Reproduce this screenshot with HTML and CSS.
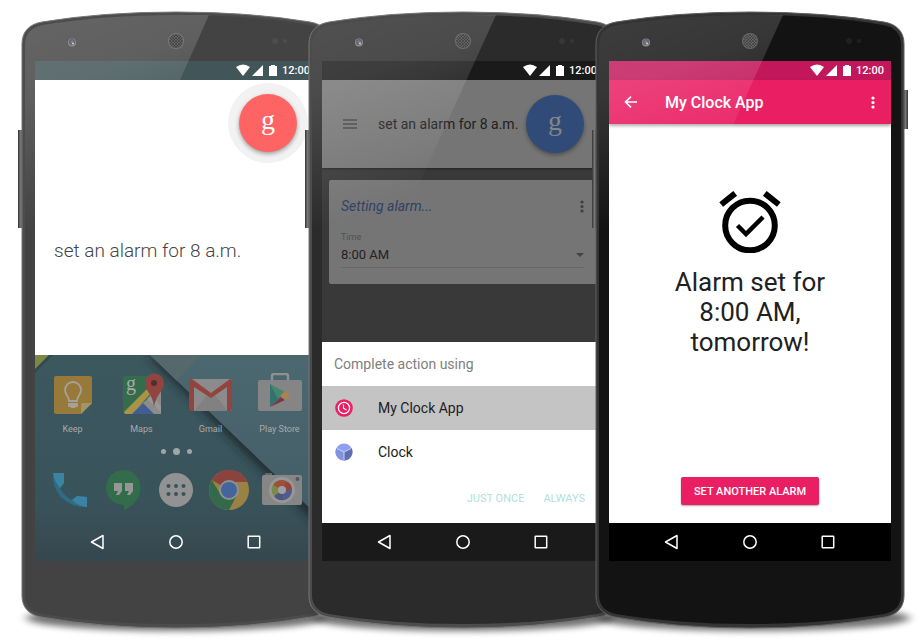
FILE: index.html
```html
<!DOCTYPE html>
<html lang="en">
<head>
<meta charset="utf-8">
<title>Set an alarm by voice</title>
<link rel="stylesheet" href="styles.css">
</head>
<body>
<svg class="defs" aria-hidden="true">
  <defs>
    <linearGradient id="glare" x1="0" y1="0" x2="0.25" y2="1">
      <stop offset="0" stop-color="#fff" stop-opacity=".18"/>
      <stop offset=".3" stop-color="#fff" stop-opacity=".15"/>
      <stop offset=".8" stop-color="#fff" stop-opacity="0"/>
    </linearGradient>
    <linearGradient id="key" x1="0" x2="1">
      <stop offset="0" stop-color="#333"/>
      <stop offset=".5" stop-color="#777"/>
      <stop offset="1" stop-color="#333"/>
    </linearGradient>
    <pattern id="mesh" width="3" height="3" patternUnits="userSpaceOnUse">
      <circle cx="1" cy="1" r=".9" fill="#1c1c1c"/>
      <circle cx="2.500" cy="2.500" r=".7" fill="#1c1c1c"/>
    </pattern>
    <filter id="soft" x="-20%" y="-80%" width="140%" height="260%"><feGaussianBlur stdDeviation="5 3"/></filter>
    <filter id="fold" x="-20%" y="-20%" width="140%" height="140%"><feGaussianBlur stdDeviation="5"/></filter>
    <path id="shell" d="M0 34C0 21 8 14 20 12Q80 2 154 2T288 12C300 14 308 21 308 34V586C308 598 300 605 289 607Q228 618 154 618T19 607C8 605 0 598 0 586Z"/>
    <path id="shell-inner" d="M3 35C3 23 10 17 21 15Q80 5 154 5T287 15C298 17 305 23 305 35V585C305 596 298 602 288 604Q228 614 154 614T20 604C10 602 3 596 3 585Z"/>
    <g id="status-glyphs" fill="#fff">
      <path d="M0 3Q7-2 14 3L7 12Z"/>
      <path d="M27 1V12H16Z"/>
      <path d="M33 2H35V1H39V2H41V12H33V2Z"/>
    </g>
    <g id="back-glyph"><path d="M13 1.500V14.500L1.500 8Z" fill="none" stroke="#fff" stroke-width="1.500" stroke-linejoin="round"/></g>
    <g id="home-glyph"><circle cx="8" cy="8" r="6.200" fill="none" stroke="#fff" stroke-width="1.500"/></g>
    <g id="recent-glyph"><rect x="2.200" y="2.200" width="11.500" height="11.500" rx=".5" fill="none" stroke="#fff" stroke-width="1.500"/></g>
    <g id="more-glyph"><circle cx="2" cy="2" r="1.600"/><circle cx="2" cy="6.500" r="1.600"/><circle cx="2" cy="11" r="1.600"/></g>
    <g id="hardware">
      <circle cx="50" cy="32.500" r="4" fill="#777"/><circle cx="50" cy="32" r="3" fill="#444"/><circle cx="50" cy="32" r="1.800" fill="#5a59a0"/><circle cx="51" cy="33.500" r="1" fill="#ccc"/>
      <circle cx="154" cy="31" r="8" fill="#777" fill-opacity=".6"/><circle cx="154" cy="31" r="7" fill="#4a4a4a"/><circle cx="154" cy="31" r="7" fill="url(#mesh)"/>
      <circle cx="253" cy="31" r="3" fill="#fff" fill-opacity=".06"/><circle cx="263" cy="31" r="2" fill="#fff" fill-opacity=".06"/>
    </g>
  </defs>
</svg>

<main class="stage">
  <section class="phone phone-listen" aria-label="Voice search">
    <svg class="frame" viewBox="0 0 308 619" preserveAspectRatio="none" aria-hidden="true">
      <ellipse class="ground" cx="154" cy="608" rx="150" ry="13"/>
      <rect x="-4" y="120" width="5" height="98" fill="url(#key)"/>
      <use href="#shell" class="rim"/><use href="#shell-inner" class="face"/><use href="#hardware"/>
    </svg>
    <div class="screen">
      <header class="status status-home"><svg width="41" height="13" aria-hidden="true"><use href="#status-glyphs"/></svg><span>12:00</span></header>
      <div class="listen">
        <div class="halo"><button class="mic mic-red" aria-label="Listening">g</button></div>
        <p class="heard">set an alarm for 8 a.m.</p>
      </div>
      <div class="home">
        <svg class="wallpaper" viewBox="0 0 282 206" preserveAspectRatio="none" aria-hidden="true">
          <defs>
            <linearGradient id="teal" x1="0" y1="0" x2="0" y2="1"><stop offset="0" stop-color="#3c585f"/><stop offset=".7" stop-color="#39535b"/><stop offset="1" stop-color="#36474e"/></linearGradient>
            <linearGradient id="slate" x1="0" y1="0" x2="0" y2="1"><stop offset="0" stop-color="#4b6870"/><stop offset="1" stop-color="#445d67"/></linearGradient>
          </defs>
          <rect width="282" height="206" fill="url(#teal)"/>
          <path d="M112 0H135L282 145V170Z" fill="#1d2529" opacity=".85" filter="url(#fold)"/>
          <path d="M115 0H282V160Z" fill="url(#slate)"/>
          <path d="M115 0H166L142 26Z" fill="#55696c"/>
          <path d="M0 18L18 0H0Z" fill="#263a3f" opacity=".5"/><path d="M0 14L14 0H0Z" fill="#7d8747"/>
        </svg>
        <div class="apps">
          <button class="app"><svg width="44" height="44" viewBox="0 0 44 44" aria-hidden="true">
            <rect x="3" y="3" width="38" height="38" rx="2" fill="#97793a"/><path d="M41 30V41H30Z" fill="#3c585f"/><path d="M30 41V32Q30 30 32 30H41Z" fill="#a59463"/>
            <path d="M18 28C18 23 14 22 14 17A8 8 0 0 1 30 17C30 22 26 23 26 28Z M18 31H26V33H18Z M20 34H24" fill="none" stroke="#a4a29b" stroke-width="1.800"/></svg><span>Keep</span></button>
          <button class="app"><svg width="44" height="44" viewBox="0 0 44 44" aria-hidden="true">
            <rect x="3" y="3" width="38" height="38" rx="2" fill="#356c4c"/><path d="M41 16V41H8Z" fill="#8c8c8c"/><path d="M4 39L29 14L33 18L12 41H5Z" fill="#a99347"/><path d="M12 41L23 30L34 41Z" fill="#405e94"/><path d="M27 26L31 22L41 33V39Z" fill="#979797"/>
            <path d="M34 34C33 21 25 18 25 10A9.500 9.500 0 0 1 44 10C44 18 36 21 34 34Z" fill="#914540"/><circle cx="34" cy="10" r="3" fill="#552e2c"/><text class="map-g" x="6" y="17">g</text></svg><span>Maps</span></button>
          <button class="app"><svg width="44" height="44" viewBox="0 0 44 44" aria-hidden="true">
            <rect x="1" y="6" width="42" height="32" rx="2" fill="#8b8b8b"/><path d="M5 38L18 22L22 25L26 22L39 38Z" fill="#818181"/><path d="M0 8C0 6 1 6 3 6L22 20L41 6Q43 6 43 8V36Q43 38 41 38H38V14L22 25L5 14V38H3Q0 38 0 36Z" fill="#92443f"/></svg><span>Gmail</span></button>
          <button class="app"><svg width="44" height="44" viewBox="0 0 44 44" aria-hidden="true">
            <path d="M14 8V3Q14 1 16 1H28Q30 1 30 3V8" fill="none" stroke="#909090" stroke-width="2.500"/><rect x="0" y="7" width="44" height="31" rx="2" fill="#858585"/>
            <path d="M12 11L25 22L12 34Z" fill="#32736f"/><path d="M12 11L27 19L20 26Z" fill="#46866f"/><path d="M12 34L23 24L27 27Z" fill="#7d344b"/><path d="M27 18L33 22L27 27L22 23Z" fill="#a7844c"/></svg><span>Play Store</span></button>
        </div>
        <div class="pages" aria-hidden="true"><i></i><i class="current"></i><i></i></div>
        <div class="dock">
          <button aria-label="Phone"><svg width="42" height="42" viewBox="0 0 42 42"><path d="M4 4H15V14L11 19Q15 27 23 31L28 27L38 28V38Q23 39 12 28Q3 18 4 4Z" fill="#2f6b85"/><path d="M4 4H15V14L11 19Q5 12 4 4ZM23 31L28 27L38 28V38Q29 37 23 31Z" fill="#3a83a3"/></svg></button>
          <button aria-label="Hangouts"><svg width="42" height="42" viewBox="0 0 42 42"><path d="M21 1A17.500 17.500 0 0 1 38.500 18.500C38.500 31 30 37 22 41V36A17.500 17.500 0 1 1 21 1Z" fill="#336c4b"/><path d="M12 14H20V22L17 26H14L16 22H12ZM23 14H31V22L28 26H25L27 22H23Z" fill="#969696"/></svg></button>
          <button aria-label="All apps"><svg width="42" height="42" viewBox="0 0 42 42"><circle cx="21" cy="21" r="17" fill="#929292"/><g fill="#3a535b"><circle cx="13.500" cy="17" r="2"/><circle cx="21" cy="17" r="2"/><circle cx="28.500" cy="17" r="2"/><circle cx="13.500" cy="25" r="2"/><circle cx="21" cy="25" r="2"/><circle cx="28.500" cy="25" r="2"/></g></svg></button>
          <button aria-label="Chrome"><svg width="42" height="42" viewBox="0 0 42 42"><circle cx="21" cy="21" r="20" fill="#9a8245"/><path d="M21 21L3.700 11A20 20 0 0 1 39.500 13H21Z" fill="#8b433e"/><path d="M3.700 11A20 20 0 0 0 21 41L29 26L21 21L13 26Z" fill="#336a4b"/><circle cx="21" cy="21" r="10" fill="#8f9190"/><circle cx="21" cy="21" r="8" fill="#44659b"/></svg></button>
          <button aria-label="Camera"><svg width="42" height="42" viewBox="0 0 42 42"><path d="M4 4H11V8H4Z" fill="#656565"/><rect x="1" y="6" width="40" height="30" rx="2" fill="#868686"/><circle cx="36.500" cy="10" r="2" fill="#555"/><circle cx="21" cy="21" r="13" fill="#979797"/>
            <circle cx="21" cy="21" r="10" fill="#9b7d43"/><path d="M21 21L12 16A10 10 0 0 1 25 12Z" fill="#9a503b"/><path d="M21 21L31 21A10 10 0 0 1 23 31Z" fill="#525b90"/><path d="M21 21L23 31A10 10 0 0 1 13 27Z" fill="#4d5581"/><path d="M21 21L13 27A10 10 0 0 1 12 16Z" fill="#798a48"/><path d="M21 21L25 12A10 10 0 0 1 31 21Z" fill="#90463d"/><circle cx="21" cy="21" r="4" fill="#a0a0a0"/></svg></button>
        </div>
        <nav class="nav nav-clear">
          <button aria-label="Back"><svg width="16" height="16"><use href="#back-glyph"/></svg></button>
          <button aria-label="Home"><svg width="16" height="16"><use href="#home-glyph"/></svg></button>
          <button aria-label="Recent apps"><svg width="16" height="16"><use href="#recent-glyph"/></svg></button>
        </nav>
      </div>
    </div>
    <svg class="glare" viewBox="0 0 308 619" preserveAspectRatio="none" aria-hidden="true"><path d="M3 35C3 23 10 17 21 15Q80 5 154 5L187 5L158 70H13V260H3Z" fill="url(#glare)"/></svg>
  </section>

  <section class="phone phone-choose" aria-label="Choose an app">
    <svg class="frame" viewBox="0 0 308 619" preserveAspectRatio="none" aria-hidden="true">
      <ellipse class="ground" cx="154" cy="608" rx="150" ry="13"/>
      <rect x="-4" y="120" width="5" height="98" fill="url(#key)"/>
      <use href="#shell" class="rim"/><use href="#shell-inner" class="face"/><use href="#hardware"/>
    </svg>
    <div class="screen">
      <header class="status status-dark"><svg width="41" height="13" aria-hidden="true"><use href="#status-glyphs"/></svg><span>12:00</span></header>
      <div class="query">
        <button class="menu" aria-label="Menu"><svg width="14" height="10" viewBox="0 0 14 10"><path d="M0 1H14M0 5H14M0 9H14" stroke="#414141" stroke-width="1.300"/></svg></button>
        <span class="query-text">set an alarm for 8 a.m.</span>
        <button class="mic mic-blue" aria-label="Voice search">g</button>
      </div>
      <div class="results">
        <div class="card">
          <div class="card-head"><em>Setting alarm...</em><button aria-label="More options"><svg width="4" height="13" fill="#3e3e3e"><use href="#more-glyph"/></svg></button></div>
          <label class="time-label" for="time">Time</label>
          <div class="time-field">
            <select id="time"><option>8:00 AM</option></select>
            <svg width="8" height="4" aria-hidden="true"><path d="M0 0H8L4 4Z" fill="#444"/></svg>
          </div>
        </div>
      </div>
      <div class="sheet">
        <h2>Complete action using</h2>
        <button class="choice chosen"><svg width="18" height="18" viewBox="0 0 18 18" aria-hidden="true"><circle cx="9" cy="9" r="8.800" fill="#e91e63"/><circle cx="9" cy="9" r="5.600" fill="none" stroke="#fff" stroke-width="1.300"/><path d="M8.500 5.500V9.300L11.500 11" fill="none" stroke="#fff" stroke-width="1.100"/></svg>My Clock App</button>
        <button class="choice"><svg width="18" height="18" viewBox="0 0 18 18" aria-hidden="true"><circle cx="9" cy="9" r="8.500" fill="#8e9ff0"/><path d="M9 9L16.500 5A8.500 8.500 0 0 1 9 17.500Z" fill="#5d6fae"/><path d="M9 9L1.500 5A8.500 8.500 0 0 0 9 17.500Z" fill="#8192df"/><path d="M2 5.500L9 9L16 5.500M9 9V17" fill="none" stroke="#c9d1fa" stroke-width="1"/></svg>Clock</button>
        <div class="sheet-actions"><button>JUST ONCE</button><button>ALWAYS</button></div>
      </div>
      <nav class="nav nav-dark">
        <button aria-label="Back"><svg width="16" height="16"><use href="#back-glyph"/></svg></button>
        <button aria-label="Home"><svg width="16" height="16"><use href="#home-glyph"/></svg></button>
        <button aria-label="Recent apps"><svg width="16" height="16"><use href="#recent-glyph"/></svg></button>
      </nav>
    </div>
    <svg class="glare" viewBox="0 0 308 619" preserveAspectRatio="none" aria-hidden="true"><path d="M3 35C3 23 10 17 21 15Q80 5 154 5L187 5L71 260H3Z" fill="url(#glare)"/></svg>
  </section>

  <section class="phone phone-done" aria-label="My Clock App">
    <svg class="frame" viewBox="0 0 308 619" preserveAspectRatio="none" aria-hidden="true">
      <ellipse class="ground" cx="158" cy="608" rx="156" ry="13"/>
      <rect x="-4" y="120" width="5" height="98" fill="url(#key)"/><rect x="307" y="80" width="5" height="39" fill="url(#key)"/>
      <use href="#shell" class="rim"/><use href="#shell-inner" class="face"/><use href="#hardware"/>
    </svg>
    <div class="screen">
      <header class="status status-pink"><svg width="41" height="13" aria-hidden="true"><use href="#status-glyphs"/></svg><span>12:00</span></header>
      <div class="toolbar">
        <button class="up" aria-label="Back"><svg width="14" height="12" viewBox="0 0 14 12"><path d="M7 .7L1.500 6L7 11.300M1.500 6H13" fill="none" stroke="#fff" stroke-width="1.600"/></svg></button>
        <h1>My Clock App</h1>
        <button aria-label="More options"><svg width="4" height="13" fill="#fff"><use href="#more-glyph"/></svg></button>
      </div>
      <div class="confirm">
        <svg width="62" height="62" viewBox="0 0 62 62" aria-hidden="true"><g fill="none" stroke="#000"><circle cx="31" cy="34.500" r="24.800" stroke-width="6"/><path d="M18.500 34.500L27 43L44 26" stroke-width="4.500"/><path d="M2.200 13.500L16.200 2.300M59.800 13.500L45.800 2.300" stroke-width="6"/></g></svg>
        <p>Alarm set for 8:00 AM, tomorrow!</p>
        <button class="again">SET ANOTHER ALARM</button>
      </div>
      <nav class="nav nav-black">
        <button aria-label="Back"><svg width="16" height="16"><use href="#back-glyph"/></svg></button>
        <button aria-label="Home"><svg width="16" height="16"><use href="#home-glyph"/></svg></button>
        <button aria-label="Recent apps"><svg width="16" height="16"><use href="#recent-glyph"/></svg></button>
      </nav>
    </div>
    <svg class="glare" viewBox="0 0 308 619" preserveAspectRatio="none" aria-hidden="true"><path d="M3 35C3 23 10 17 21 15Q80 5 154 5L187 5L71 260H3Z" fill="url(#glare)"/></svg>
  </section>
</main>
</body>
</html>
```
FILE: styles.css
```css
* { box-sizing: border-box; }
body { margin: 0; background: #fff; color: #212121; font-family: Roboto, "Liberation Sans", sans-serif; }
h1, h2, p { margin: 0; font-weight: 400; }
button { display: flex; align-items: center; justify-content: center; margin: 0; padding: 0; border: 0; background: none; color: inherit; font: inherit; }
svg { display: block; flex: none; }
.defs { position: absolute; width: 0; height: 0; }

/* Three overlapping handsets */
.stage { display: flex; padding: 10px 16px 12px 22px; overflow: hidden; }
.phone { position: relative; isolation: isolate; flex: 1; min-width: 0; padding: 51px 13px 68px; }
.phone + .phone { margin-left: -21px; }
.frame, .glare { position: absolute; top: 0; left: 0; width: 100%; height: 100%; overflow: visible; pointer-events: none; }
.ground { fill: #000; opacity: .55; filter: url(#soft); }
.rim { fill: #4c4c4c; stroke: #777; stroke-width: 1; }
.phone-listen .face { fill: #434343; }
.phone-choose .face { fill: #2b2b2b; }
.phone-done .face { fill: #131313; }
.phone-done .rim { fill: #343434; stroke: #606060; }
.screen { position: relative; isolation: isolate; display: flex; flex-direction: column; min-height: 500px; overflow: hidden; }

/* System bars */
.status { display: flex; align-items: center; justify-content: flex-end; gap: 5px; height: 19px; padding-right: 7px; color: #fff; font-size: 11px; font-weight: 500; line-height: 19px; }
.status-home { background: #425558; }
.status-dark { background: #1a1a1a; }
.status-pink { background: #c2185b; }
.nav { display: flex; justify-content: center; height: 38px; }
.nav button { width: 78px; height: 38px; }
.nav-dark { background: #1a1a1a; }
.nav-black { background: #000; }

/* Voice input and home screen */
.mic { width: 58px; height: 58px; padding-bottom: 6px; border-radius: 50%; font: 28px/1 "Liberation Serif", serif; }
.mic-red { background: #ff6464; color: #fff; box-shadow: 0 2px 4px rgba(0, 0, 0, .35); }
.mic-blue { background: #304b78; color: #858585; box-shadow: 0 2px 4px rgba(0, 0, 0, .35); }
.listen { display: flex; flex-direction: column; height: 275px; padding: 3px 9px 0 19px; background: #fff; }
.halo { display: grid; place-items: center; align-self: flex-end; width: 80px; height: 80px; border-radius: 50%; background: #f2f2f2; }
.heard { margin-top: 76px; color: #444; font-size: 19px; font-weight: 300; line-height: 24px; }
.home { position: relative; display: flex; flex: 1; flex-direction: column; padding-top: 18px; }
.home > * { position: relative; }
.home > .wallpaper { position: absolute; top: 0; left: 0; width: 100%; height: 100%; }
.apps { display: grid; grid-template-columns: repeat(4, 1fr); padding: 0 3px; }
.app { flex-direction: column; gap: 6px; color: #aaa; font-size: 9px; line-height: 12px; }
.map-g { fill: #a5aaa7; font: 20px "Liberation Serif", serif; }
.pages { display: flex; align-items: center; justify-content: center; gap: 7px; height: 8px; margin: 12px 0 14px; }
.pages i { width: 5px; height: 5px; border-radius: 50%; background: #a0a6a8; }
.pages .current { width: 7px; height: 7px; }
.dock { display: grid; grid-template-columns: repeat(5, 1fr); padding: 0 9px; }
.home > .nav { margin-top: auto; }

/* Search result behind the chooser */
.query { display: flex; align-items: center; height: 88px; padding: 0 20px 0 21px; background: #757575; box-shadow: 0 1px 2px #222; z-index: 1; }
.query-text { flex: 1; margin-left: 21px; color: #202020; font-size: 14px; white-space: nowrap; }
.results { flex: 1; padding: 12px 7px; background: #393939; }
.card { height: 104px; padding: 16px 13px 15px 12px; border-radius: 2px; background: #757575; }
.card-head { display: flex; align-items: center; justify-content: space-between; color: #2f4166; font-size: 14px; line-height: 20px; }
.time-label { display: block; margin-top: 15px; color: #505050; font-size: 9px; line-height: 12px; }
.time-field { display: flex; align-items: center; height: 25px; border-bottom: 1px solid #686868; }
.time-field select { flex: 1; padding: 0; border: 0; background: none; color: #222; font: 13px/20px Roboto, sans-serif; appearance: none; }

/* App chooser */
.sheet { background: #fff; }
.sheet h2 { padding: 0 12px; color: #808080; font-size: 14px; line-height: 44px; }
.choice { justify-content: flex-start; gap: 25px; width: 100%; height: 44px; padding: 0 13px; font-size: 14px; }
.chosen { background: #c4c4c4; }
.sheet-actions { display: flex; justify-content: flex-end; gap: 19px; height: 49px; padding-right: 19px; color: #b2dfdb; font-size: 11px; }

/* Confirmation */
.toolbar { z-index: 1; display: flex; align-items: center; height: 44px; padding: 0 16px 0 15px; background: #e91e63; box-shadow: 0 2px 3px rgba(0, 0, 0, .35); color: #fff; }
.toolbar h1 { flex: 1; margin-left: 27px; font-size: 16px; font-weight: 500; }
.confirm { display: flex; flex: 1; flex-direction: column; align-items: center; padding: 67px 50px 18px; background: #fff; }
.confirm p { max-width: 160px; margin-top: 14px; font-size: 26px; line-height: 30px; text-align: center; }
.again { height: 28px; margin-top: auto; padding: 0 13px; border-radius: 2px; background: #e91e63; box-shadow: 0 1px 2px rgba(0, 0, 0, .35); color: #fff; font-size: 11px; font-weight: 500; white-space: nowrap; }
```
